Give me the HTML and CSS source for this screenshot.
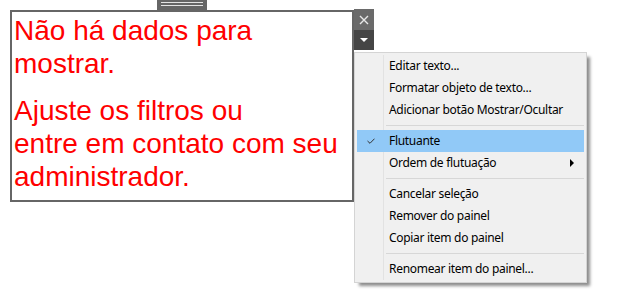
FILE: index.html
```html
<!DOCTYPE html>
<html lang="pt">
<head>
  <meta charset="UTF-8">
  <title>Caixa de texto</title>
  <link rel="stylesheet" href="styles.css">
</head>
<body>

  <div class="stage">
    <div class="visual">
      <div class="handle"></div>
      <div class="textbox">
        <p>Não há dados para mostrar.</p>
        <p>Ajuste os filtros ou<br>entre em contato com seu administrador.</p>
      </div>
      <div class="tools">
        <button class="tool close">
          <svg width="10" height="10" viewBox="0 0 10 10"><path d="M1 1L9 9M9 1L1 9" stroke="#e8e8e8" stroke-width="1.4"/></svg>
        </button>
        <button class="tool drop"><span class="caret"></span></button>
      </div>
    </div>

    <!-- menu de contexto -->
    <div class="menu">
      <div class="item">Editar texto...</div>
      <div class="item">Formatar objeto de texto...</div>
      <div class="item">Adicionar botão Mostrar/Ocultar</div>
      <div class="sep"></div>
      <div class="item active">
        <svg class="check" width="8" height="6" viewBox="0 0 8 6"><path d="M0.5 3L3 5.3L7.5 0.7" fill="none" stroke="#333" stroke-width="1"/></svg>
        Flutuante
      </div>
      <div class="item">Ordem de flutuação <span class="sub"></span></div>
      <div class="sep"></div>
      <div class="item">Cancelar seleção</div>
      <div class="item">Remover do painel</div>
      <div class="item">Copiar item do painel</div>
      <div class="sep"></div>
      <div class="item">Renomear item do painel...</div>
    </div>
  </div>

</body>
</html>
```

FILE: styles.css
```css
* { margin: 0; padding: 0; box-sizing: border-box; }
html, body {
  width: 100%;
  height: 100%;
  background: #fff;
}
.stage {
  position: relative;
  padding: 9px 0 0 10px;
  height: 100%;
}
.visual {
  display: flex;
  align-items: flex-start;
}
.handle {
  position: absolute;
  top: 0;
  left: 157px;
  width: 50px;
  height: 10px;
  background: #666;
}
.handle::before,
.handle::after {
  content: "";
  position: absolute;
  left: 4px;
  right: 4px;
  height: 1px;
  background: #e4e4e4;
}
.handle::before { top: 2px; }
.handle::after { top: 5px; }
.textbox {
  margin-top: 1px;
  width: 344px;
  height: 192px;
  border: 2px solid #666;
  padding: 2px 2px;
  font-family: "Liberation Sans", Arial, sans-serif;
  font-size: 28px;
  line-height: 33px;
  color: #f00;
}
.textbox p { margin-bottom: 14px; }
.tools {
  display: flex;
  flex-direction: column;
  width: 20px;
}
.tool {
  border: none;
  display: flex;
  align-items: center;
  justify-content: center;
  width: 20px;
  cursor: pointer;
}
.tool.close {
  height: 21px;
  background: #6a6a6a;
}
.tool.drop {
  height: 20px;
  background: #454545;
}
.caret {
  width: 0;
  height: 0;
  border-left: 4px solid transparent;
  border-right: 4px solid transparent;
  border-top: 4px solid #fff;
}
.menu {
  position: absolute;
  left: 354px;
  top: 52px;
  width: 233px;
  padding: 2px;
  background: #f0f0f0;
  border: 1px solid #d4d4d4;
  box-shadow: 4px 4px 3px -1px rgba(0,0,0,0.45);
  font-family: "Noto Sans", "Open Sans", sans-serif;
  font-size: 12px;
  letter-spacing: -0.3px;
  color: #000;
}
.menu::before {
  content: "";
  position: absolute;
  top: 2px;
  bottom: 2px;
  left: 28px;
  width: 1px;
  background: #e2e2e2;
}
.item {
  position: relative;
  height: 22px;
  line-height: 22px;
  padding-left: 32px;
}
.item.active { background: #91c9f7; }
.check {
  position: absolute;
  left: 10px;
  top: 8px;
}
.sub {
  position: absolute;
  left: 213px;
  top: 7px;
  width: 0;
  height: 0;
  border-top: 4px solid transparent;
  border-bottom: 4px solid transparent;
  border-left: 4px solid #000;
}
.sep {
  height: 9px;
  margin-left: 29px;
  padding-top: 4px;
}
.sep::after {
  content: "";
  display: block;
  height: 1px;
  background: #d7d7d7;
}
```
